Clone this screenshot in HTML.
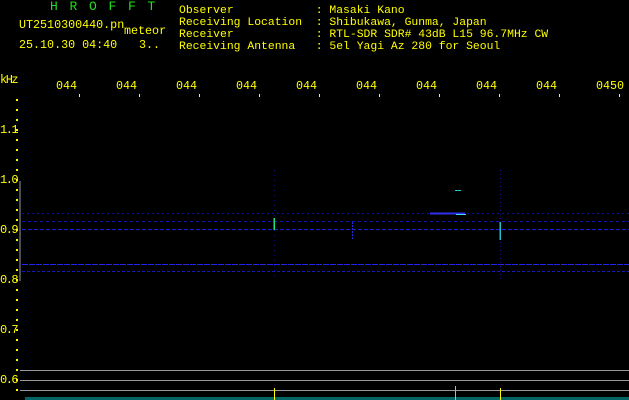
<!DOCTYPE html>
<html><head><meta charset="utf-8"><style>
body{margin:0;width:629px;height:400px;background:#000;overflow:hidden;position:relative;font-family:"Liberation Mono",monospace;font-size:11.7px;color:#ffff00}
.t{position:absolute;white-space:pre;line-height:12px}
.y{position:absolute;left:0;letter-spacing:-1.5px;font-size:12px;line-height:12px}
</style></head><body>
<div class="t" style="left:50px;top:1px;color:#22dd22;font-size:13px;letter-spacing:11.7px">HROFFT</div>
<div class="t" style="left:19px;top:19px">UT2510300440.pn</div>
<div class="t" style="left:124px;top:25px">meteor</div>
<div class="t" style="left:19px;top:39px">25.10.30 04:40</div>
<div class="t" style="left:139px;top:39px">3..</div>
<div class="t" style="left:179px;top:5px;font-size:11.4px">Observer            : Masaki Kano
Receiving Location  : Shibukawa, Gunma, Japan
Receiver            : RTL-SDR SDR# 43dB L15 96.7MHz CW
Receiving Antenna   : 5el Yagi Az 280 for Seoul</div>
<div class="y" style="top:74px">kHz</div>
<div class="y" style="top:124px">1.1</div>
<div class="y" style="top:174px">1.0</div>
<div class="y" style="top:224px">0.9</div>
<div class="y" style="top:274px">0.8</div>
<div class="y" style="top:324px">0.7</div>
<div class="y" style="top:374px">0.6</div>
<div class="t" style="left:56px;top:80px">044</div>
<div class="t" style="left:116px;top:80px">044</div>
<div class="t" style="left:176px;top:80px">044</div>
<div class="t" style="left:236px;top:80px">044</div>
<div class="t" style="left:296px;top:80px">044</div>
<div class="t" style="left:356px;top:80px">044</div>
<div class="t" style="left:416px;top:80px">044</div>
<div class="t" style="left:476px;top:80px">044</div>
<div class="t" style="left:536px;top:80px">044</div>
<div class="t" style="left:596px;top:80px">0450</div>
<svg width="629" height="400" style="position:absolute;left:0;top:0" shape-rendering="crispEdges">
<g stroke="#ffff00" stroke-width="2">
<line x1="16" y1="100" x2="18" y2="100"/><line x1="16" y1="110" x2="18" y2="110"/><line x1="16" y1="120" x2="18" y2="120"/><line x1="16" y1="130" x2="18" y2="130"/><line x1="16" y1="140" x2="18" y2="140"/><line x1="16" y1="150" x2="18" y2="150"/><line x1="16" y1="160" x2="18" y2="160"/><line x1="16" y1="170" x2="18" y2="170"/><line x1="16" y1="180" x2="18" y2="180"/><line x1="16" y1="190" x2="18" y2="190"/><line x1="16" y1="200" x2="18" y2="200"/><line x1="16" y1="210" x2="18" y2="210"/><line x1="16" y1="220" x2="18" y2="220"/><line x1="16" y1="230" x2="18" y2="230"/><line x1="16" y1="240" x2="18" y2="240"/><line x1="16" y1="250" x2="18" y2="250"/><line x1="16" y1="260" x2="18" y2="260"/><line x1="16" y1="270" x2="18" y2="270"/><line x1="16" y1="280" x2="18" y2="280"/><line x1="16" y1="290" x2="18" y2="290"/><line x1="16" y1="300" x2="18" y2="300"/><line x1="16" y1="310" x2="18" y2="310"/><line x1="16" y1="320" x2="18" y2="320"/><line x1="16" y1="330" x2="18" y2="330"/><line x1="16" y1="340" x2="18" y2="340"/><line x1="16" y1="350" x2="18" y2="350"/><line x1="16" y1="360" x2="18" y2="360"/><line x1="16" y1="370" x2="18" y2="370"/><line x1="16" y1="380" x2="18" y2="380"/><line x1="16" y1="390" x2="18" y2="390"/>
</g>
<line x1="20" y1="181" x2="20" y2="281" stroke="#999" stroke-width="1"/>
<g stroke="#999" stroke-width="1">
<line x1="20" y1="370.5" x2="629" y2="370.5"/><line x1="20" y1="380.5" x2="629" y2="380.5"/><line x1="20" y1="390.5" x2="629" y2="390.5"/>
</g>
<g stroke-width="1" fill="none">
<line x1="22" y1="213.5" x2="629" y2="213.5" stroke="#1010a0" stroke-dasharray="2 3"/>
<line x1="22" y1="221.5" x2="629" y2="221.5" stroke="#1414b0" stroke-dasharray="3 3"/>
<line x1="22" y1="229.5" x2="629" y2="229.5" stroke="#2020d8" stroke-dasharray="4 2"/>
<line x1="22" y1="264.5" x2="629" y2="264.5" stroke="#2424e8" stroke-dasharray="6 1"/>
<line x1="22" y1="271.5" x2="629" y2="271.5" stroke="#1818c0" stroke-dasharray="3 2"/>
<line x1="430" y1="213.5" x2="465" y2="213.5" stroke="#3030f0" stroke-width="2"/>
<line x1="274.5" y1="170" x2="274.5" y2="280" stroke="#10108a" stroke-dasharray="1 4"/>
<line x1="500.5" y1="170" x2="500.5" y2="280" stroke="#1414a0" stroke-dasharray="1 3"/>
<line x1="352.5" y1="222" x2="352.5" y2="240" stroke="#2828e0" stroke-dasharray="2 1"/>
</g>
<line x1="274" y1="218" x2="274" y2="230" stroke="#20e080" stroke-width="1.5"/>
<line x1="500" y1="222" x2="500" y2="240" stroke="#20c0d0" stroke-width="1.5"/>
<line x1="455" y1="190.5" x2="461" y2="190.5" stroke="#20d0d0" stroke-width="1"/>
<line x1="456" y1="214.5" x2="466" y2="214.5" stroke="#40e0e0" stroke-width="1"/>
<rect x="25" y="397" width="604" height="3" fill="#00e0e0" opacity="0.45"/>
<line x1="274.5" y1="388" x2="274.5" y2="400" stroke="#ffff00" stroke-width="1"/>
<line x1="500.5" y1="388" x2="500.5" y2="400" stroke="#ffff00" stroke-width="1"/>
<line x1="455.5" y1="386" x2="455.5" y2="400" stroke="#00ffff" stroke-width="1"/>
<g stroke="#ffff00" stroke-width="1">
<line x1="79.5" y1="94" x2="79.5" y2="97"/><line x1="139.5" y1="94" x2="139.5" y2="97"/><line x1="199.5" y1="94" x2="199.5" y2="97"/><line x1="259.5" y1="94" x2="259.5" y2="97"/><line x1="319.5" y1="94" x2="319.5" y2="97"/><line x1="379.5" y1="94" x2="379.5" y2="97"/><line x1="439.5" y1="94" x2="439.5" y2="97"/><line x1="499.5" y1="94" x2="499.5" y2="97"/><line x1="559.5" y1="94" x2="559.5" y2="97"/><line x1="619.5" y1="94" x2="619.5" y2="97"/>
</g>
</svg>
</body></html>
